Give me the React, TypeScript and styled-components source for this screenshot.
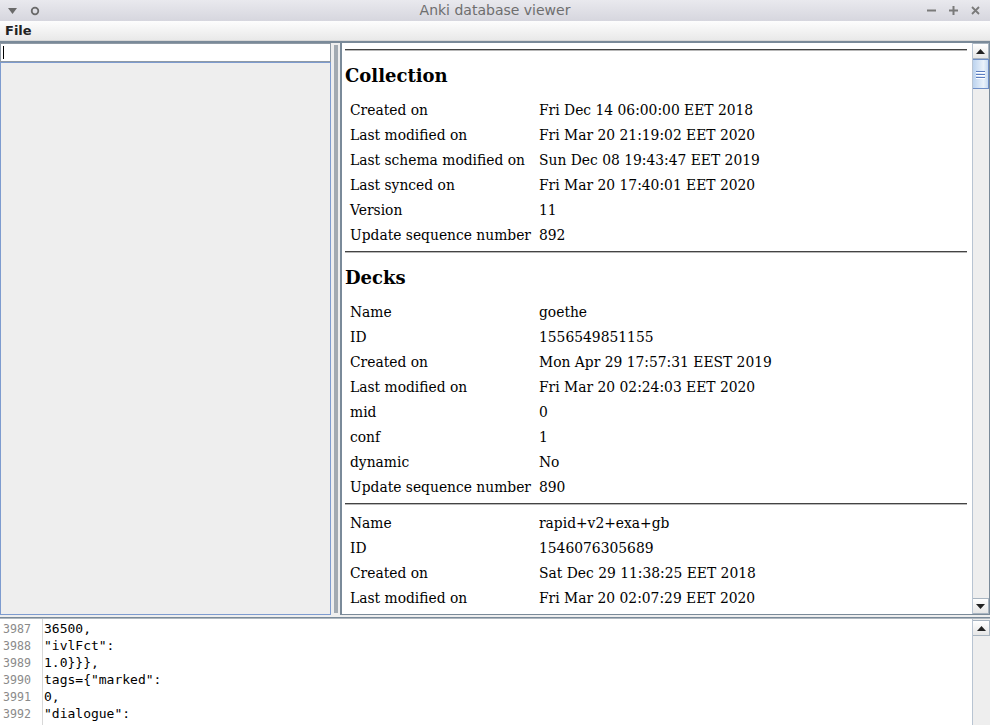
import React from "react";
import styled, { createGlobalStyle } from "styled-components";

const Global = createGlobalStyle`
  html, body { margin: 0; padding: 0; background: #eeeeee; }
  body { font-family: "DejaVu Sans", sans-serif; }
  * { box-sizing: border-box; }
`;

const Window = styled.div`
  width: 990px;
  height: 725px;
  display: flex;
  flex-direction: column;
  overflow: hidden;
  background: #eeeeee;
`;

const TitleBar = styled.div`
  height: 21px;
  flex: none;
  display: flex;
  align-items: center;
  justify-content: space-between;
  padding: 0 10px 0 8px;
  background: linear-gradient(#e9e9ee, #d6d6de);
  position: relative;
`;

const Title = styled.div`
  position: absolute;
  left: 0;
  right: 0;
  text-align: center;
  font-size: 14px;
  color: #6e6e6e;
  line-height: 21px;
  pointer-events: none;
`;

const TitleGroup = styled.div<{ $gap: number }>`
  display: flex;
  align-items: center;
  gap: ${(p) => p.$gap}px;
`;

const MenuBar = styled.div`
  height: 20px;
  flex: none;
  display: flex;
  align-items: center;
  padding-left: 5px;
  background: linear-gradient(#fdfdfd, #e9e9e9);
  border-bottom: 1px solid #d8d8d8;
`;

const MenuItem = styled.span`
  font-weight: bold;
  font-size: 13px;
  color: #222;
`;

const TopSplit = styled.div`
  flex: none;
  height: 574px;
  display: flex;
  border-top: 2px solid #7a8a99;
`;

const LeftPane = styled.div`
  width: 331px;
  display: flex;
  flex-direction: column;
`;

const SearchField = styled.div`
  height: 19px;
  background: #fff;
  border: 1px solid #8f9aa5;
  position: relative;
  &::after {
    content: "";
    position: absolute;
    left: 2px;
    top: 2px;
    width: 1px;
    height: 13px;
    background: #000;
  }
`;

const ListArea = styled.div`
  flex: 1;
  background: #eeeeee;
  border: 1px solid #7d9bcf;
`;

const VSplitter = styled.div`
  width: 9px;
  display: flex;
  justify-content: center;
  background: #eeeeee;
`;

const Dots = styled.div`
  width: 4px;
  margin: 2px 0;
  background-image: radial-gradient(circle, #a0a8b0 0.7px, transparent 0.9px);
  background-size: 2px 2px;
`;

const RightPane = styled.div`
  flex: 1;
  display: flex;
  border-left: 2px solid #7a8a99;
  border-bottom: 1px solid #7a8a99;
  border-right: 1px solid #7a8a99;
  background: #fff;
`;

const Viewport = styled.div`
  flex: 1;
  overflow: hidden;
  padding: 0 3px;
  font-family: "DejaVu Serif", serif;
  color: #000;
`;

const Rule = styled.div<{ $mt: number }>`
  margin-top: ${(p) => p.$mt}px;
  margin-right: 2px;
  height: 2px;
  border-top: 1px solid #444;
  border-bottom: 1px solid #b8b8b8;
`;

const Heading = styled.h2`
  margin: 0;
  height: 46px;
  padding-top: 12px;
  line-height: 26px;
  font-size: 18px;
  font-weight: bold;
`;

const Table = styled.div<{ $mt?: number }>`
  margin-top: ${(p) => p.$mt ?? 0}px;
  display: grid;
  grid-template-columns: 194px 1fr;
  grid-auto-rows: 25px;
  font-size: 13.85px;
  align-items: center;
`;

const Label = styled.div`
  padding-left: 5px;
  white-space: nowrap;
`;

const Value = styled.div`
  white-space: nowrap;
`;

const ScrollBar = styled.div`
  width: 17px;
  flex: none;
  display: flex;
  flex-direction: column;
  background: #eeeeee;
  border-left: 1px solid #b8c4d2;
`;

const ArrowButton = styled.div`
  height: 16px;
  flex: none;
  display: flex;
  align-items: center;
  justify-content: center;
  background: linear-gradient(#ffffff, #e6e6e6);
  border: 1px solid #a8b4c0;
  border-left: none;
`;

const Thumb = styled.div`
  height: 30px;
  flex: none;
  display: flex;
  flex-direction: column;
  align-items: center;
  justify-content: center;
  gap: 2px;
  background: linear-gradient(90deg, #bcd3ee, #eaf2fb 70%, #c9dcf1);
  border: 1px solid #6f8fc8;
  border-left: none;
`;

const Grip = styled.div`
  width: 9px;
  height: 1px;
  background: #5b7dc0;
  box-shadow: 0 1px 0 #fff;
`;

const Track = styled.div`
  flex: 1;
`;

const HSplitter = styled.div`
  height: 3px;
  flex: none;
  background: #eeeeee;
  border-bottom: 1px solid #7a8a99;
`;

const BottomPane = styled.div`
  flex: 1;
  display: flex;
  background: #fff;
  border-top: 1px solid #b0b8c0;
`;

const Gutter = styled.div`
  width: 43px;
  flex: none;
  padding: 2px 0 0 3px;
  border-right: 1px solid #d8d8d8;
  font-family: "DejaVu Sans Mono", monospace;
  font-size: 11.6px;
  line-height: 16.9px;
  color: #8a8a8a;
`;

const Code = styled.div`
  flex: 1;
  padding: 2px 0 0 1px;
  font-family: "DejaVu Sans Mono", monospace;
  font-size: 13px;
  line-height: 16.9px;
  color: #000;
  white-space: pre;
`;

const BottomScroll = styled.div`
  width: 18px;
  flex: none;
  display: flex;
  flex-direction: column;
  background: #eeeeee;
  border-left: 1px solid #b8c4d2;
  padding-top: 1px;
`;

const Up = () => (
  <svg width="9" height="5" viewBox="0 0 9 5">
    <polygon points="0,5 9,5 4.5,0" fill="#222" />
  </svg>
);
const Down = () => (
  <svg width="9" height="5" viewBox="0 0 9 5">
    <polygon points="0,0 9,0 4.5,5" fill="#222" />
  </svg>
);

const collection: [string, string][] = [
  ["Created on", "Fri Dec 14 06:00:00 EET 2018"],
  ["Last modified on", "Fri Mar 20 21:19:02 EET 2020"],
  ["Last schema modified on", "Sun Dec 08 19:43:47 EET 2019"],
  ["Last synced on", "Fri Mar 20 17:40:01 EET 2020"],
  ["Version", "11"],
  ["Update sequence number", "892"],
];

const deck1: [string, string][] = [
  ["Name", "goethe"],
  ["ID", "1556549851155"],
  ["Created on", "Mon Apr 29 17:57:31 EEST 2019"],
  ["Last modified on", "Fri Mar 20 02:24:03 EET 2020"],
  ["mid", "0"],
  ["conf", "1"],
  ["dynamic", "No"],
  ["Update sequence number", "890"],
];

const deck2: [string, string][] = [
  ["Name", "rapid+v2+exa+gb"],
  ["ID", "1546076305689"],
  ["Created on", "Sat Dec 29 11:38:25 EET 2018"],
  ["Last modified on", "Fri Mar 20 02:07:29 EET 2020"],
];

const codeLines: [number, string][] = [
  [3987, "36500,"],
  [3988, '"ivlFct":'],
  [3989, "1.0}}},"],
  [3990, 'tags={"marked":'],
  [3991, "0,"],
  [3992, '"dialogue":'],
];

const Rows = ({ rows, mt }: { rows: [string, string][]; mt?: number }) => (
  <Table $mt={mt}>
    {rows.map(([k, v], i) => (
      <React.Fragment key={i}>
        <Label>{k}</Label>
        <Value>{v}</Value>
      </React.Fragment>
    ))}
  </Table>
);

export default function App() {
  return (
    <Window>
      <Global />
      <TitleBar>
        <Title>Anki database viewer</Title>
        <TitleGroup $gap={13}>
          <svg width="9" height="6" viewBox="0 0 9 6">
            <polygon points="0,0 9,0 4.5,6" fill="#6a6a6a" />
          </svg>
          <svg width="10" height="10" viewBox="0 0 10 10">
            <circle cx="5" cy="5" r="3.3" fill="none" stroke="#6a6a6a" strokeWidth="1.8" />
          </svg>
        </TitleGroup>
        <TitleGroup $gap={13}>
          <svg width="9" height="9" viewBox="0 0 9 9">
            <rect x="0" y="3.5" width="9" height="2" fill="#7a7a7a" />
          </svg>
          <svg width="9" height="9" viewBox="0 0 9 9">
            <rect x="0" y="3.5" width="9" height="2" fill="#7a7a7a" />
            <rect x="3.5" y="0" width="2" height="9" fill="#7a7a7a" />
          </svg>
          <svg width="9" height="9" viewBox="0 0 9 9">
            <path d="M1 1 L8 8 M8 1 L1 8" stroke="#7a7a7a" strokeWidth="1.8" />
          </svg>
        </TitleGroup>
      </TitleBar>
      <MenuBar>
        <MenuItem>File</MenuItem>
      </MenuBar>
      <TopSplit>
        <LeftPane>
          <SearchField />
          <ListArea />
        </LeftPane>
        <VSplitter>
          <Dots />
        </VSplitter>
        <RightPane>
          <Viewport>
            <Rule $mt={6} />
            <Heading>Collection</Heading>
            <Rows rows={collection} />
            <Rule $mt={4} />
            <Heading>Decks</Heading>
            <Rows rows={deck1} />
            <Rule $mt={4} />
            <Rows rows={deck2} mt={5} />
          </Viewport>
          <ScrollBar>
            <ArrowButton>
              <Up />
            </ArrowButton>
            <Thumb>
              <Grip />
              <Grip />
              <Grip />
            </Thumb>
            <Track />
            <ArrowButton>
              <Down />
            </ArrowButton>
          </ScrollBar>
        </RightPane>
      </TopSplit>
      <HSplitter />
      <BottomPane>
        <Gutter>
          {codeLines.map(([n]) => (
            <div key={n}>{n}</div>
          ))}
        </Gutter>
        <Code>
          {codeLines.map(([n, t]) => (
            <div key={n}>{t}</div>
          ))}
        </Code>
        <BottomScroll>
          <ArrowButton>
            <Up />
          </ArrowButton>
          <Track />
        </BottomScroll>
      </BottomPane>
    </Window>
  );
}
